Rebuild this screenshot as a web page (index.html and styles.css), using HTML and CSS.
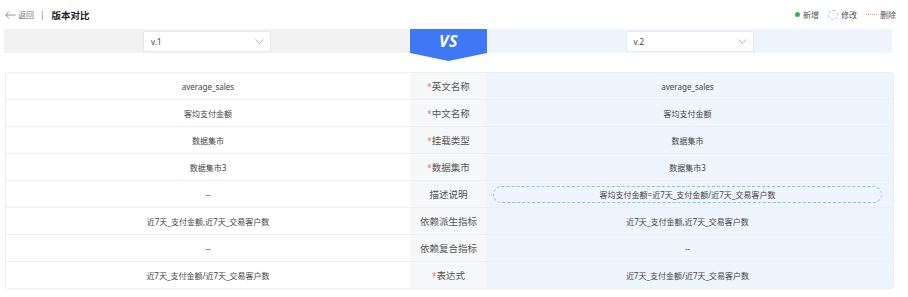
FILE: index.html
```html
<!DOCTYPE html>
<html lang="zh-CN">
<head>
    <meta charset="UTF-8">
    <meta name="viewport" content="width=device-width, initial-scale=1.0">
    <title>版本对比</title>
    <link rel="stylesheet" href="styles.css">
</head>
<body>

    <div class="topbar">
        <div class="crumb">
            <span class="back">
                <svg width="11" height="8" viewBox="0 0 11 8"><path d="M4 0.5 L0.8 4 L4 7.5 M0.8 4 H10.5" fill="none" stroke="#888" stroke-width="0.9"/></svg>
                返回
            </span>
            <span class="sep">|</span>
            <span class="title">版本对比</span>
        </div>
        <div class="legend">
            <span class="lg"><i class="dot-add"></i>新增</span>
            <span class="lg"><i class="dot-edit"></i>修改</span>
            <span class="lg"><i class="dot-del"></i>删除</span>
        </div>
    </div>

    <div class="compare-bar">
        <div class="side side-old">
            <div class="select">
                <span>v.1</span>
                <svg width="9" height="5" viewBox="0 0 9 5"><path d="M0.5 0.5 L4.5 4.5 L8.5 0.5" fill="none" stroke="#aaa" stroke-width="0.8"/></svg>
            </div>
        </div>
        <div class="vs">VS</div>
        <div class="side side-new">
            <div class="select">
                <span>v.2</span>
                <svg width="9" height="5" viewBox="0 0 9 5"><path d="M0.5 0.5 L4.5 4.5 L8.5 0.5" fill="none" stroke="#aaa" stroke-width="0.8"/></svg>
            </div>
        </div>
    </div>

    <div class="diff-table">
        <div class="row">
            <div class="cell">average_sales</div>
            <div class="label"><em>*</em>英文名称</div>
            <div class="cell new">average_sales</div>
        </div>
        <div class="row">
            <div class="cell">客均支付金额</div>
            <div class="label"><em>*</em>中文名称</div>
            <div class="cell new">客均支付金额</div>
        </div>
        <div class="row">
            <div class="cell">数据集市</div>
            <div class="label"><em>*</em>挂载类型</div>
            <div class="cell new">数据集市</div>
        </div>
        <div class="row">
            <div class="cell">数据集市3</div>
            <div class="label"><em>*</em>数据集市</div>
            <div class="cell new">数据集市3</div>
        </div>
        <div class="row">
            <div class="cell">--</div>
            <div class="label">描述说明</div>
            <div class="cell new"><span class="changed">客均支付金额=近7天_支付金额/近7天_交易客户数</span></div>
        </div>
        <div class="row">
            <div class="cell">近7天_支付金额,近7天_交易客户数</div>
            <div class="label">依赖派生指标</div>
            <div class="cell new">近7天_支付金额,近7天_交易客户数</div>
        </div>
        <div class="row">
            <div class="cell">--</div>
            <div class="label">依赖复合指标</div>
            <div class="cell new">--</div>
        </div>
        <div class="row">
            <div class="cell">近7天_支付金额/近7天_交易客户数</div>
            <div class="label"><em>*</em>表达式</div>
            <div class="cell new">近7天_支付金额/近7天_交易客户数</div>
        </div>
    </div>

</body>
</html>
```

FILE: styles.css
```css
body {
    font-family: 'Noto Sans', 'Noto Sans CJK SC', sans-serif;
    background-color: #fff;
    color: #333;
    margin: 0;
    padding: 0;
}

.topbar {
    display: flex;
    justify-content: space-between;
    align-items: center;
    height: 29px;
    padding: 0 12px 0 5px;
}

.crumb {
    display: flex;
    align-items: center;
}

.back {
    display: flex;
    align-items: center;
    gap: 2px;
    font-size: 8px;
    color: #777;
}

.sep {
    font-size: 8px;
    color: #777;
    margin: 0 7px 0 6px;
}

.title {
    font-size: 9.5px;
    font-weight: bold;
    color: #222;
}

.legend {
    display: flex;
    align-items: center;
    gap: 9px;
    font-size: 8px;
    color: #555;
}

.lg {
    display: flex;
    align-items: center;
    gap: 3px;
}

.dot-add {
    width: 5px;
    height: 5px;
    border-radius: 50%;
    background-color: #1dbf5b;
}

.dot-edit {
    width: 8px;
    height: 8px;
    border-radius: 50%;
    border: 1px dashed #8ec0f7;
}

.dot-del {
    width: 11px;
    border-top: 1px dotted #f0866a;
}

.compare-bar {
    display: grid;
    grid-template-columns: 406px 77px 405px;
    align-items: start;
    margin-left: 4px;
}

.side {
    height: 24px;
    display: flex;
    align-items: center;
    justify-content: center;
}

.side-old {
    background-color: #f2f2f2;
}

.side-new {
    background-color: #eef5fe;
}

.select {
    box-sizing: border-box;
    width: 128px;
    height: 21px;
    background-color: #fff;
    border: 1px solid #e6e8ec;
    border-radius: 2px;
    display: flex;
    align-items: center;
    justify-content: space-between;
    padding: 0 6px 0 7px;
    font-size: 8px;
    color: #444;
}

.vs {
    height: 32px;
    background-color: #3e78f4;
    clip-path: polygon(0 0, 100% 0, 100% 75%, 50% 100%, 0 75%);
    color: #fff;
    font-size: 16px;
    font-weight: bold;
    font-style: italic;
    text-align: center;
    line-height: 25px;
    letter-spacing: 0.5px;
}

.diff-table {
    margin: 11px 0 0 5px;
    width: 887px;
    border: 1px solid #eceef2;
    border-radius: 3px;
    overflow: hidden;
}

.row {
    display: grid;
    grid-template-columns: 404px 77px 1fr;
    height: 26px;
    border-bottom: 1px solid #eceef2;
}

.row:last-child {
    border-bottom: none;
}

.cell {
    display: flex;
    align-items: center;
    justify-content: center;
    font-size: 8px;
    color: #444;
}

.cell.new {
    background-color: #eef5fe;
    padding: 0 11px 0 6px;
}

.label {
    display: flex;
    align-items: center;
    justify-content: center;
    background-color: #f6f7f9;
    font-size: 9.5px;
    color: #555;
}

.label em {
    font-style: normal;
    color: #f56c6c;
    font-size: 8px;
}

.changed {
    flex: 1;
    height: 17px;
    box-sizing: border-box;
    border: 1px dashed #8ec0f7;
    border-radius: 9px;
    display: flex;
    align-items: center;
    justify-content: center;
}
```
